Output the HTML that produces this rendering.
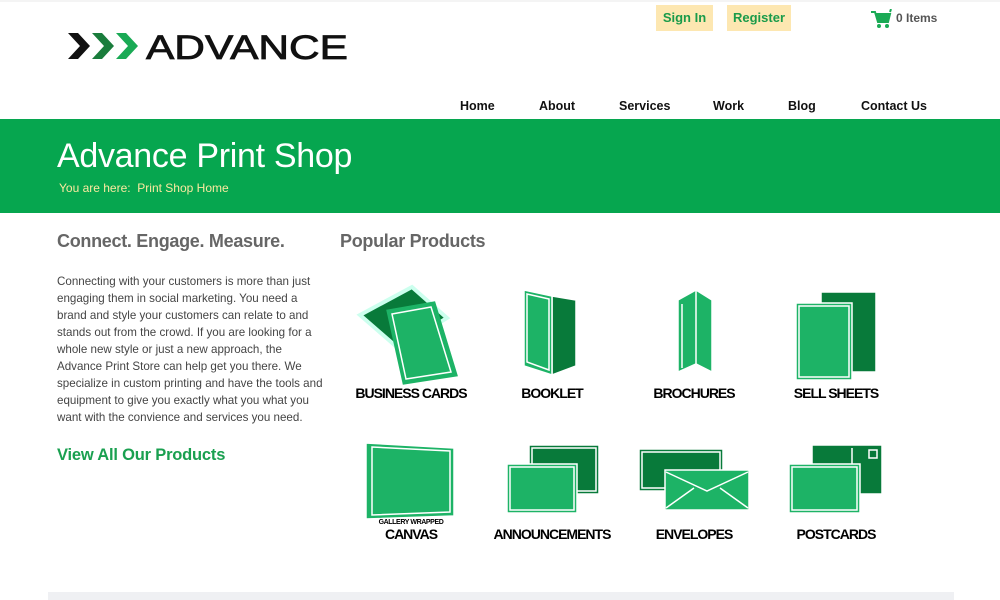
<!DOCTYPE html>
<html><head><style>
body{margin:0;width:1000px;height:600px;position:relative;background:#fff;font-family:"Liberation Sans",sans-serif;overflow:hidden}
.a{position:absolute}
.btn{background:#fde7b1;color:#1a9b4a;font-weight:bold;font-size:13px;height:26px;line-height:26px;text-align:center;top:5px}
.nav{top:99px;font-size:12.5px;font-weight:bold;color:#111}
.lbl{font-size:14px;font-weight:bold;color:#000;letter-spacing:-1px;text-align:center;width:140px}
</style></head><body>
<div class="a" style="left:0;top:0;width:1000px;height:2px;background:#f4f4f4"></div>
<svg class="a" style="left:68px;top:33px" width="290" height="30">
<polygon points="0,0 10,0 22,13 10,26 0,26 12,13" fill="#111"/>
<polygon points="24,0 34,0 46,13 34,26 24,26 36,13" fill="#1a7d3c"/>
<polygon points="48,0 58,0 70,13 58,26 48,26 60,13" fill="#1aaa55"/>
<text x="78" y="26" font-family="Liberation Sans" font-size="34" fill="#111" stroke="#111" stroke-width="0.8" textLength="202" lengthAdjust="spacingAndGlyphs">ADVANCE</text>
</svg>
<div class="a btn" style="left:656px;width:57px">Sign In</div>
<div class="a btn" style="left:727px;width:64px">Register</div>
<svg class="a" style="left:870px;top:9px" width="22" height="20"><path d="M1 3h4l3 10h10l2-8H6M20 3l1-3" stroke="#1aaa55" stroke-width="2" fill="none"/><rect x="7" y="5" width="12" height="7" fill="#1aaa55"/><circle cx="9" cy="17" r="2" fill="#1aaa55"/><circle cx="17" cy="17" r="2" fill="#1aaa55"/></svg>
<div class="a" style="left:896px;top:11px;font-size:12px;font-weight:bold;color:#555">0 Items</div>
<div class="a nav" style="left:460px">Home</div>
<div class="a nav" style="left:539px">About</div>
<div class="a nav" style="left:619px">Services</div>
<div class="a nav" style="left:713px">Work</div>
<div class="a nav" style="left:788px">Blog</div>
<div class="a nav" style="left:861px">Contact Us</div>
<div class="a" style="left:0;top:119px;width:1000px;height:94px;background:#06a64f"></div>
<div class="a" style="left:57px;top:137px;font-size:34px;color:#fff;letter-spacing:-0.3px">Advance Print Shop</div>
<div class="a" style="left:59px;top:181px;font-size:12px;color:#fbe9a0">You are here:&nbsp; Print Shop Home</div>
<div class="a" style="left:57px;top:231px;font-size:18px;font-weight:bold;color:#666;letter-spacing:-0.3px">Connect. Engage. Measure.</div>
<div class="a" style="left:57px;top:273px;width:270px;font-size:11.6px;line-height:17px;color:#444">Connecting with your customers is more than just engaging them in social marketing. You need a brand and style your customers can relate to and stands out from the crowd. If you are looking for a whole new style or just a new approach, the Advance Print Store can help get you there. We specialize in custom printing and have the tools and equipment to give you exactly what you what you want with the convience and services you need.</div>
<div class="a" style="left:57px;top:446px;font-size:16.5px;font-weight:bold;color:#1aa050;letter-spacing:-0.2px">View All Our Products</div>
<div class="a" style="left:340px;top:231px;font-size:18px;font-weight:bold;color:#666;letter-spacing:-0.3px">Popular Products</div>
<svg class="a" style="left:0;top:0" width="1000" height="600">
<g stroke="#fff" stroke-width="1.5">
<polygon points="360,315 412,287 447,318 398,348" fill="#087a3a" stroke="#cfe" stroke-width="4"/>
<polygon points="388,311 434,303 456,375 404,383" fill="#1db366" stroke="#1db366" stroke-width="3"/>
<polygon points="392,314 431,307 451,372 406,379" fill="none"/>
<polygon points="552,296 576,300 576,366 552,375" fill="#087a3a"/>
<polygon points="524,290 552,296 552,375 524,366" fill="#1db366"/>
<polygon points="527,294 549,299 549,370 527,362" fill="none"/>
<polygon points="678,300 696,290 712,300 712,372 696,364 678,372" fill="#1db366"/>
<line x1="696" y1="290" x2="696" y2="364"/><line x1="682" y1="304" x2="682" y2="368"/>
<rect x="821" y="292" width="55" height="80" fill="#087a3a"/>
<rect x="796" y="303" width="56" height="77" fill="#1db366"/><rect x="799" y="306" width="50" height="71" fill="none"/>
<polygon points="366,443 454,448 454,516 366,519" fill="#1db366"/><polygon points="372,447 450,451 450,512 372,515" fill="none"/>
<rect x="529" y="445" width="70" height="49" fill="#087a3a"/><rect x="532" y="448" width="64" height="43" fill="none"/>
<rect x="507" y="464" width="70" height="49" fill="#1db366"/><rect x="510" y="467" width="64" height="43" fill="none"/>
<rect x="639" y="449" width="84" height="42" fill="#087a3a"/><rect x="642" y="452" width="78" height="36" fill="none"/>
<rect x="665" y="470" width="84" height="40" fill="#1db366"/><path d="M666 472 L707 491 L748 472 M666 508 L694 488 M748 508 L720 488" fill="none"/>
<rect x="812" y="445" width="70" height="49" fill="#087a3a"/><line x1="852" y1="448" x2="852" y2="478"/><rect x="869" y="450" width="8" height="8" fill="none"/>
<rect x="789" y="464" width="71" height="49" fill="#1db366"/><rect x="792" y="467" width="65" height="43" fill="none"/>
</g></svg>
<div class="a lbl" style="left:341px;top:385px">BUSINESS CARDS</div>
<div class="a lbl" style="left:482px;top:385px">BOOKLET</div>
<div class="a lbl" style="left:624px;top:385px">BROCHURES</div>
<div class="a lbl" style="left:766px;top:385px">SELL SHEETS</div>
<div class="a lbl" style="left:341px;top:519px;font-size:7px;letter-spacing:-0.4px">GALLERY WRAPPED</div>
<div class="a lbl" style="left:341px;top:526px">CANVAS</div>
<div class="a lbl" style="left:482px;top:526px">ANNOUNCEMENTS</div>
<div class="a lbl" style="left:624px;top:526px">ENVELOPES</div>
<div class="a lbl" style="left:766px;top:526px">POSTCARDS</div>
<div class="a" style="left:48px;top:592px;width:906px;height:8px;background:#eff0f3"></div>
</body></html>
